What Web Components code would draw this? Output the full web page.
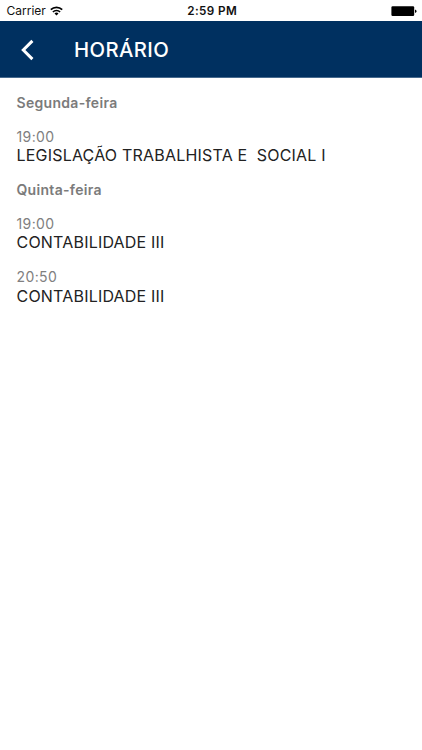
<!DOCTYPE html>
<html lang="pt-BR">
<head>
<meta charset="utf-8">
<title>Horário</title>
<style>
  body {
    margin: 0;
    background: #fff;
    font-family: Inter, "Liberation Sans", sans-serif;
  }
</style>
</head>
<body>
<status-bar carrier="Carrier" time="2:59 PM"></status-bar>
<nav-header>HORÁRIO</nav-header>
<class-schedule>
  <schedule-day name="Segunda-feira">
    <schedule-lesson time="19:00">LEGISLAÇÃO TRABALHISTA E&nbsp; SOCIAL I</schedule-lesson>
  </schedule-day>
  <schedule-day name="Quinta-feira">
    <schedule-lesson time="19:00">CONTABILIDADE III</schedule-lesson>
    <schedule-lesson time="20:50">CONTABILIDADE III</schedule-lesson>
  </schedule-day>
</class-schedule>

<script>
class StatusBar extends HTMLElement {
  constructor() {
    super();
    this.attachShadow({ mode: "open" });
    this.shadowRoot.innerHTML = `
    <style>
      :host {
        display: grid;
        grid-template-columns: 1fr auto 1fr;
        align-items: center;
        box-sizing: border-box;
        height: 21px;
        padding: 1px 5px 0 6.5px;
        font-size: 12px;
        line-height: 20px;
        color: #111;
      }
      .left {
        display: flex;
        align-items: center;
        gap: 4.5px;
      }
      #time {
        padding-left: 1px;
        font-size: 11.7px;
        font-weight: 600;
        letter-spacing: 0.4px;
      }
      .battery {
        justify-self: end;
      }
      svg {
        display: block;
      }
    </style>
    <div class="left">
      <span id="carrier"></span>
      <svg width="13" height="11" viewBox="0 0 13 11" fill="none" stroke="#000" stroke-width="1.7">
        <path d="M.8 3.7a8.100 8.100 0 0 1 11.400 0"/>
        <path d="M2.900 6a5.100 5.100 0 0 1 7.200 0"/>
        <path d="M6.500 9.500 4.500 7.400a2.800 2.800 0 0 1 4 0z" fill="#000" stroke="none"/>
      </svg>
    </div>
    <span id="time"></span>
    <svg class="battery" width="26" height="11" viewBox="0 0 26 11">
      <rect x=".4" y=".3" width="22.8" height="9.6" rx="1.2" fill="#000"/>
      <path d="M24 3.700v3c.9 0 1.600-.6 1.600-1.500S24.900 3.700 24 3.700z" fill="#000"/>
    </svg>
    `;
  }

  connectedCallback() {
    this.shadowRoot.querySelector("#carrier").textContent = this.getAttribute("carrier");
    this.shadowRoot.querySelector("#time").textContent = this.getAttribute("time");
  }
}

class NavHeader extends HTMLElement {
  constructor() {
    super();
    this.attachShadow({ mode: "open" });
    this.shadowRoot.innerHTML = `
    <style>
      :host {
        display: flex;
        align-items: center;
        gap: 39px;
        box-sizing: border-box;
        height: 57px;
        padding: 1px 0 0 20px;
        background: #003060;
        border-bottom: 1px solid #476a8e;
        color: #fff;
      }
      button {
        display: flex;
        padding: 0;
        border: 0;
        background: none;
      }
      h1 {
        margin: 0;
        font-size: 20.3px;
        font-weight: 500;
        line-height: 24px;
        letter-spacing: 0.4px;
      }
    </style>
    <button aria-label="Voltar">
      <svg width="15" height="22" viewBox="0 0 15 22" fill="none" stroke="#fff" stroke-width="3">
        <path d="M12.400 1.900 3.300 11l9.100 9.100"/>
      </svg>
    </button>
    <h1><slot></slot></h1>
    `;
  }
}

class ClassSchedule extends HTMLElement {
  constructor() {
    super();
    this.attachShadow({ mode: "open" });
    this.shadowRoot.innerHTML = `
    <style>
      :host {
        display: block;
        padding: 8px 16.5px;
      }
    </style>
    <slot></slot>
    `;
  }
}

class ScheduleDay extends HTMLElement {
  constructor() {
    super();
    this.attachShadow({ mode: "open" });
    this.shadowRoot.innerHTML = `
    <style>
      :host {
        display: block;
      }
      h2 {
        margin: 0;
        font-size: 14px;
        font-weight: 600;
        line-height: 33.5px;
        letter-spacing: 0.3px;
        color: #7b7b7b;
      }
    </style>
    <h2></h2>
    <slot></slot>
    `;
  }

  connectedCallback() {
    this.shadowRoot.querySelector("h2").textContent = this.getAttribute("name");
  }
}

class ScheduleLesson extends HTMLElement {
  constructor() {
    super();
    this.attachShadow({ mode: "open" });
    this.shadowRoot.innerHTML = `
    <style>
      :host {
        display: block;
        padding: 8px 0;
      }
      #time {
        font-size: 14px;
        line-height: 17.5px;
        letter-spacing: 0.4px;
        color: #808080;
      }
      #subject {
        font-size: 16px;
        line-height: 20px;
        letter-spacing: 0.2px;
        color: #222;
      }
    </style>
    <div id="time"></div>
    <div id="subject"><slot></slot></div>
    `;
  }

  connectedCallback() {
    this.shadowRoot.querySelector("#time").textContent = this.getAttribute("time");
  }
}

customElements.define("status-bar", StatusBar);
customElements.define("nav-header", NavHeader);
customElements.define("class-schedule", ClassSchedule);
customElements.define("schedule-day", ScheduleDay);
customElements.define("schedule-lesson", ScheduleLesson);
</script>
</body>
</html>
